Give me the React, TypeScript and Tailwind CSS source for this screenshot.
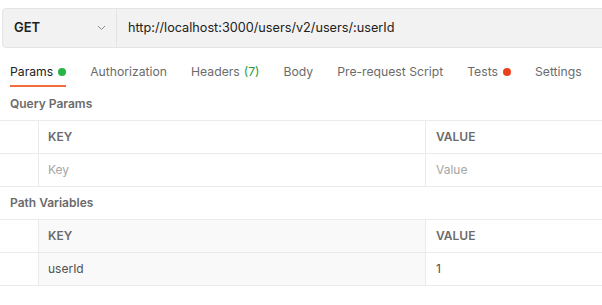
import React from 'react'

type Row = { key: string; value: string; placeholder?: boolean }

const ParamTable: React.FC<{ rows: Row[]; shadeKey?: boolean }> = ({ rows, shadeKey }) => {
  const keyBg = shadeKey ? 'bg-[#f9f9f9]' : 'bg-white'
  return (
    <div className="border-t border-[#ebebeb]">
      <div className="flex h-[33px] border-b border-[#ebebeb]">
        <div className="w-[39px] shrink-0 border-r border-[#ebebeb]" />
        <div className={`w-[387px] shrink-0 border-r border-[#ebebeb] ${keyBg} flex items-center pl-[9px] text-[12px] font-semibold text-[#6b6b6b]`}>
          KEY
        </div>
        <div className="flex-1 flex items-center pl-[10px] text-[12px] font-semibold text-[#6b6b6b]">VALUE</div>
      </div>
      {rows.map((row, i) => (
        <div key={i} className="flex h-[33px] border-b border-[#ebebeb]">
          <div className="w-[39px] shrink-0 border-r border-[#ebebeb]" />
          <div
            className={`w-[387px] shrink-0 border-r border-[#ebebeb] ${keyBg} flex items-center pl-[9px] text-[12px] ${
              row.placeholder ? 'text-[#a6a6a6]' : 'text-[#505050]'
            }`}
          >
            {row.key}
          </div>
          <div
            className={`flex-1 flex items-center pl-[10px] text-[12px] ${
              row.placeholder ? 'text-[#a6a6a6]' : 'text-[#505050]'
            }`}
          >
            {row.value}
          </div>
        </div>
      ))}
    </div>
  )
}

export default function App() {
  const tabs = [
    { label: 'Params', active: true, dot: 'bg-[#26b547]' },
    { label: 'Authorization' },
    { label: 'Headers', count: '(7)' },
    { label: 'Body' },
    { label: 'Pre-request Script' },
    { label: 'Tests', dot: 'bg-[#e8411c]' },
    { label: 'Settings' },
  ] as { label: string; active?: boolean; dot?: string; count?: string }[]

  return (
    <div className="w-[602px] h-[305px] overflow-hidden bg-white font-['Inter',sans-serif]">
      {/* url bar */}
      <div className="pt-[8px] pl-[2px]">
        <div className="flex w-[640px] h-[40px] bg-[#f2f2f2] border border-[#e4e4e4] rounded-[4px]">
          <div className="w-[114px] shrink-0 flex items-center justify-between pl-[11px] pr-[10px] border-r border-[#e4e4e4]">
            <span className="text-[13px] font-semibold text-[#212121]">GET</span>
            <svg width="9" height="6" viewBox="0 0 9 6" fill="none">
              <path d="M1 1l3.5 3.5L8 1" stroke="#8a8a8a" strokeWidth="1" />
            </svg>
          </div>
          <div className="flex items-center pl-[11px] text-[12.7px] text-[#212121] whitespace-nowrap">
            http://localhost:3000/users/v2/users/:userId
          </div>
        </div>
      </div>

      {/* tabs */}
      <div className="flex gap-[24px] pl-[10px] mt-[14px] whitespace-nowrap">
        {tabs.map((t) => (
          <div key={t.label} className="flex flex-col shrink-0">
            <div className={`flex items-center h-[20px] text-[12.2px] ${t.active ? 'text-[#212121]' : 'text-[#6b6b6b]'}`}>
              {t.label}
              {t.count && <span className="ml-[4px] text-[#2a9a44]">{t.count}</span>}
              {t.dot && <span className={`ml-[5px] w-[8px] h-[8px] rounded-full ${t.dot}`} />}
            </div>
            <div className={`mt-[3px] h-[2px] ${t.active ? 'bg-[#f26b3a]' : 'bg-transparent'}`} />
          </div>
        ))}
      </div>

      <div className="h-[24px] flex items-center pl-[10px] mt-[5px] text-[12px] font-semibold text-[#6b6b6b]">
        Query Params
      </div>
      <div className="mt-[4px]">
        <ParamTable rows={[{ key: 'Key', value: 'Value', placeholder: true }]} />
      </div>

      <div className="h-[24px] flex items-center pl-[10px] mt-[4px] text-[12px] font-semibold text-[#6b6b6b]">
        Path Variables
      </div>
      <div className="mt-[4px]">
        <ParamTable shadeKey rows={[{ key: 'userId', value: '1' }]} />
      </div>
    </div>
  )
}
